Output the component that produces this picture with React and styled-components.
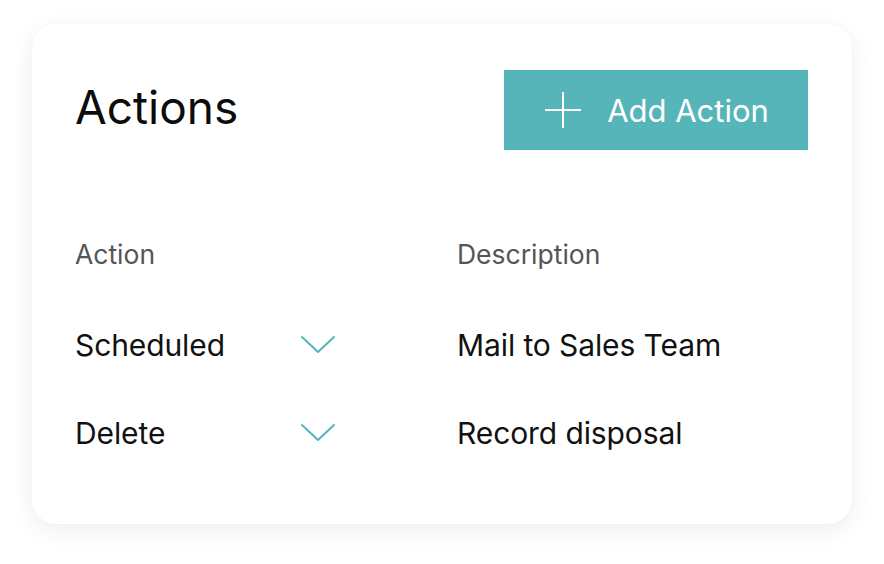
import React from "react";
import styled, { createGlobalStyle } from "styled-components";

const Global = createGlobalStyle`
  html, body { margin: 0; padding: 0; background: #ffffff; }
  body { font-family: Inter, "Noto Sans", sans-serif; }
`;

const Page = styled.div`
  width: 884px;
  height: 564px;
  box-sizing: border-box;
  padding: 24px 32px 40px 32px;
`;

const Card = styled.section`
  width: 820px;
  height: 500px;
  box-sizing: border-box;
  background: #ffffff;
  border-radius: 24px;
  box-shadow: 0 6px 24px rgba(0, 0, 0, 0.07), 0 0 4px rgba(0, 0, 0, 0.02);
  padding: 46px 44px 0 43px;
  display: flex;
  flex-direction: column;
`;

const Header = styled.div`
  display: flex;
  justify-content: space-between;
  align-items: center;
  height: 80px;
`;

const Title = styled.h1`
  margin: 0;
  font-size: 46px;
  font-weight: 400;
  color: #0c0c0c;
  letter-spacing: 0;
  transform: translateY(-3px);
`;

const AddButton = styled.button`
  width: 304px;
  height: 80px;
  border: none;
  border-radius: 0;
  background: #55b5b9;
  color: #ffffff;
  display: flex;
  align-items: center;
  justify-content: center;
  gap: 26px;
  font-family: inherit;
  font-size: 31px;
  font-weight: 400;
  padding: 0 0 0 2px;
  cursor: pointer;
`;

const Table = styled.div`
  margin-top: 89px;
  display: grid;
  grid-template-columns: 382px 1fr;
  grid-auto-rows: 88px;
`;

const HeadCell = styled.div`
  font-size: 26.5px;
  color: #555555;
  height: 48px;
  line-height: 30px;
`;

const Cell = styled.div`
  display: flex;
  align-items: flex-start;
  font-size: 30px;
  letter-spacing: -0.1px;
  color: #111111;
  line-height: 36px;
`;

const Select = styled.div`
  width: 260px;
  display: flex;
  justify-content: space-between;
  align-items: center;
  height: 36px;
`;

const Chevron = () => (
  <svg width="34" height="20" viewBox="0 0 34 20" fill="none">
    <path d="M1 2 L17 17 L33 2" stroke="#55b5b9" strokeWidth="2" strokeLinecap="round" strokeLinejoin="round" />
  </svg>
);

const Plus = () => (
  <svg width="36" height="36" viewBox="0 0 36 36" fill="none">
    <path d="M18 0 V36 M0 18 H36" stroke="#ffffff" strokeWidth="2" />
  </svg>
);

const rows = [
  { action: "Scheduled", description: "Mail to Sales Team" },
  { action: "Delete", description: "Record disposal" },
];

export default function App() {
  return (
    <>
      <Global />
      <Page>
        <Card>
          <Header>
            <Title>Actions</Title>
            <AddButton>
              <Plus />
              <span>Add Action</span>
            </AddButton>
          </Header>
          <Table>
            <HeadCell>Action</HeadCell>
            <HeadCell>Description</HeadCell>
            {rows.map((r) => (
              <React.Fragment key={r.action}>
                <Cell>
                  <Select>
                    <span>{r.action}</span>
                    <Chevron />
                  </Select>
                </Cell>
                <Cell>{r.description}</Cell>
              </React.Fragment>
            ))}
          </Table>
        </Card>
      </Page>
    </>
  );
}
